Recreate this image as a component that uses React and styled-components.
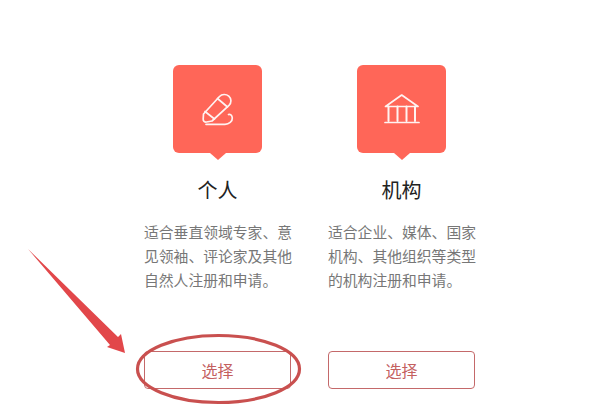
import styled, { createGlobalStyle } from "styled-components";

const cards = [
  {
    id: 1,
    title: "个人",
    desc: "适合垂直领域专家、意见领袖、评论家及其他自然人注册和申请。",
    icon: "pen",
  },
  {
    id: 2,
    title: "机构",
    desc: "适合企业、媒体、国家机构、其他组织等类型的机构注册和申请。",
    icon: "bank",
  },
];

function PenIcon() {
  return (
    <svg width="32" height="33" viewBox="-1 -1 32 33" fill="none" stroke="#fff" strokeWidth="1.7" strokeLinecap="round" strokeLinejoin="round" opacity="0.92">
      <path d="M0.5 20 L16.5 2.5 C19 0 23 -0.2 25.8 2.2 C28.6 4.8 28.6 8.8 26 11.4 L9 27 L3.5 28 C1.5 28.3 0 27 0.2 25 Z" />
      <path d="M14.5 4.5 L24.5 13" />
      <path d="M2 17.5 L11.5 25" />
      <path d="M3 30.3 H22 C26 30.3 29.5 27.5 29.3 24 C29.1 21 27 19.8 25.5 20.5" />
    </svg>
  );
}

function BankIcon() {
  return (
    <svg width="36" height="30" viewBox="0 0 36 30" fill="none" stroke="#fff" strokeWidth="1.7" strokeLinecap="round" strokeLinejoin="round" opacity="0.92">
      <path d="M1.5 12.5 L17.7 1 L34 12.5 Z" />
      <path d="M4.5 12.5 V27 M13.5 12.5 V27 M22.5 12.5 V27 M31 12.5 V27" strokeWidth="2" />
      <path d="M1 28.5 H35" />
    </svg>
  );
}

function App() {
  return (
    <>
      <GlobalStyle />
      <Page>
        <Cards>
          {cards.map((o) => (
            <Card key={o.id}>
              <IconBox>{o.icon === "pen" ? <PenIcon /> : <BankIcon />}</IconBox>
              <Title>{o.title}</Title>
              <Desc>{o.desc}</Desc>
              <SelectButton>选择</SelectButton>
            </Card>
          ))}
        </Cards>
        <Annotation width="596" height="420" viewBox="0 0 596 420">
          <polygon points="28,249 118,337 121,334 125,353 107,347 110,345" fill="#e2474a" />
          <ellipse cx="218.5" cy="369" rx="81" ry="33.5" fill="none" stroke="#c9504f" strokeWidth="3.2" />
        </Annotation>
      </Page>
    </>
  );
}

export default App;

const GlobalStyle = createGlobalStyle`
  html, body {
    margin: 0;
    padding: 0;
    background: #fff;
  }
`;

const Page = styled.div`
  position: relative;
  width: 596px;
  height: 420px;
  overflow: hidden;
  box-sizing: border-box;
  padding: 65px 0 0 144px;
  font-family: "Noto Sans CJK SC", "Liberation Sans", sans-serif;
`;

const Cards = styled.div`
  display: flex;
  gap: 34px;
`;

const Card = styled.div`
  width: 150px;
  display: flex;
  flex-direction: column;
  align-items: flex-start;
`;

const IconBox = styled.div`
  position: relative;
  width: 89px;
  height: 88px;
  margin-left: 29px;
  border-radius: 6px;
  background: #ff6658;
  display: flex;
  align-items: center;
  justify-content: center;

  &::after {
    content: "";
    position: absolute;
    left: 50%;
    bottom: -7px;
    margin-left: -8px;
    border-left: 8px solid transparent;
    border-right: 8px solid transparent;
    border-top: 7px solid #ff6658;
  }
`;

const Title = styled.div`
  width: 147px;
  margin-top: 22px;
  font-size: 20px;
  line-height: 30px;
  text-align: center;
  color: #222;
`;

const Desc = styled.p`
  width: 150px;
  height: 72px;
  margin: 15px 0 0;
  font-size: 14.8px;
  line-height: 24px;
  color: #777;
`;

const SelectButton = styled.button`
  width: 147px;
  height: 38px;
  margin-top: 59px;
  padding: 0;
  box-sizing: border-box;
  background: #fff;
  border: 1px solid #c4696a;
  border-radius: 4px;
  font-family: inherit;
  font-size: 16px;
  color: #c4605f;
`;

const Annotation = styled.svg`
  position: absolute;
  left: 0;
  top: 0;
  pointer-events: none;
`;
